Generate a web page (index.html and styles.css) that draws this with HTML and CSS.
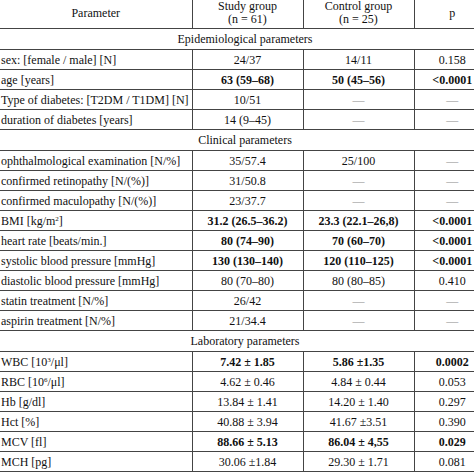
FILE: index.html
```html
<!DOCTYPE html>
<html lang="en">
<head>
<meta charset="utf-8">
<title>Parameters table</title>
<link rel="stylesheet" href="styles.css">
</head>
<body>
<table class="tbl">
  <colgroup>
    <col class="c-param">
    <col class="c-study">
    <col class="c-control">
    <col class="c-p">
  </colgroup>
  <thead>
    <tr class="head">
      <th>Parameter</th>
      <th>Study group<br>(n = 61)</th>
      <th>Control group<br>(n = 25)</th>
      <th>p</th>
    </tr>
  </thead>
  <tbody>
    <tr class="section"><td colspan="4">Epidemiological parameters</td></tr>
    <tr><td>sex: [female / male] [N]</td><td>24/37</td><td>14/11</td><td>0.158</td></tr>
    <tr class="bold"><td>age [years]</td><td>63 (59–68)</td><td>50 (45–56)</td><td>&lt;0.0001</td></tr>
    <tr><td>Type of diabetes: [T2DM / T1DM] [N]</td><td>10/51</td><td class="dash">—</td><td class="dash">—</td></tr>
    <tr><td>duration of diabetes [years]</td><td>14 (9–45)</td><td class="dash">—</td><td class="dash">—</td></tr>
    <tr class="section"><td colspan="4">Clinical parameters</td></tr>
    <tr><td>ophthalmological examination [N/%]</td><td>35/57.4</td><td>25/100</td><td class="dash">—</td></tr>
    <tr><td>confirmed retinopathy [N/(%)]</td><td>31/50.8</td><td class="dash">—</td><td class="dash">—</td></tr>
    <tr><td>confirmed maculopathy [N/(%)]</td><td>23/37.7</td><td class="dash">—</td><td class="dash">—</td></tr>
    <tr class="bold"><td>BMI [kg/m<sup>2</sup>]</td><td>31.2 (26.5–36.2)</td><td>23.3 (22.1–26,8)</td><td>&lt;0.0001</td></tr>
    <tr class="bold"><td>heart rate [beats/min.]</td><td>80 (74–90)</td><td>70 (60–70)</td><td>&lt;0.0001</td></tr>
    <tr class="bold"><td>systolic blood pressure [mmHg]</td><td>130 (130–140)</td><td>120 (110–125)</td><td>&lt;0.0001</td></tr>
    <tr><td>diastolic blood pressure [mmHg]</td><td>80 (70–80)</td><td>80 (80–85)</td><td>0.410</td></tr>
    <tr><td>statin treatment [N/%]</td><td>26/42</td><td class="dash">—</td><td class="dash">—</td></tr>
    <tr><td>aspirin treatment [N/%]</td><td>21/34.4</td><td class="dash">—</td><td class="dash">—</td></tr>
    <tr class="section"><td colspan="4">Laboratory parameters</td></tr>
    <tr class="bold"><td>WBC [10<sup>3</sup>/μl]</td><td>7.42 ± 1.85</td><td>5.86 ±1.35</td><td>0.0002</td></tr>
    <tr><td>RBC [10<sup>6</sup>/μl]</td><td>4.62 ± 0.46</td><td>4.84 ± 0.44</td><td>0.053</td></tr>
    <tr><td>Hb [g/dl]</td><td>13.84 ± 1.41</td><td>14.20 ± 1.40</td><td>0.297</td></tr>
    <tr><td>Hct [%]</td><td>40.88 ± 3.94</td><td>41.67 ±3.51</td><td>0.390</td></tr>
    <tr class="bold"><td>MCV [fl]</td><td>88.66 ± 5.13</td><td>86.04 ± 4,55</td><td>0.029</td></tr>
    <tr><td>MCH [pg]</td><td>30.06 ±1.84</td><td>29.30 ± 1.71</td><td>0.081</td></tr>
  </tbody>
</table>
</body>
</html>
```

FILE: styles.css
```css
html, body {
  margin: 0;
  padding: 0;
  background: #ffffff;
  overflow: hidden;
}

body {
  font-family: "Liberation Serif", "Times New Roman", serif;
  font-size: 12px;
  color: #111111;
}

.tbl {
  border-collapse: collapse;
  table-layout: fixed;
  width: 490px;
  margin-top: -2px;
}

.c-param { width: 192px; }
.c-study { width: 111px; }
.c-control { width: 111px; }
.c-p { width: 76px; }

.tbl th,
.tbl td {
  padding: 0;
  text-align: center;
  vertical-align: middle;
  border-bottom: 1px solid #444444;
  line-height: 14px;
  white-space: nowrap;
  overflow: hidden;
}

.tbl th {
  font-weight: normal;
  height: 30px;
  line-height: 13px;
}

.tbl th + th,
.tbl td + td {
  border-left: 1px solid #444444;
}

.tbl td {
  height: 19px;
}

.tbl td:first-child {
  text-align: left;
  padding-left: 1px;
}

.tbl tr.section td {
  text-align: center;
  height: 20px;
  padding-left: 0;
}

.tbl tr.bold td + td {
  font-weight: bold;
}

.tbl td.dash {
  color: #8a8a8a;
}

.tbl sup {
  font-size: 7px;
  line-height: 0;
  vertical-align: 4px;
}
```
